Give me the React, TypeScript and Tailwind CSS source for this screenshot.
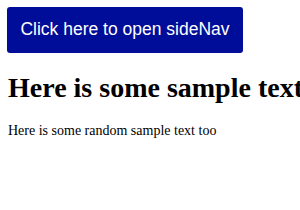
export default function App() {
  return (
    <div className="min-h-screen bg-white pt-[7px] pl-[7px] overflow-hidden">
      <button
        type="button"
        className="flex h-[46px] w-[236px] items-center justify-center rounded-[3px] bg-[#000d99] pb-px text-[17.5px] leading-none text-white font-['Liberation_Sans',Arial,sans-serif]"
      >
        Click here to open sideNav
      </button>
      <h2 className="mt-[20px] ml-px whitespace-nowrap text-[28px] font-bold leading-[30px] text-black font-['Liberation_Serif','Times_New_Roman',serif]">
        Here is some sample text
      </h2>
      <p className="mt-[20px] ml-px text-[14px] leading-[16px] text-black font-['Liberation_Serif','Times_New_Roman',serif]">
        Here is some random sample text too
      </p>
    </div>
  )
}
